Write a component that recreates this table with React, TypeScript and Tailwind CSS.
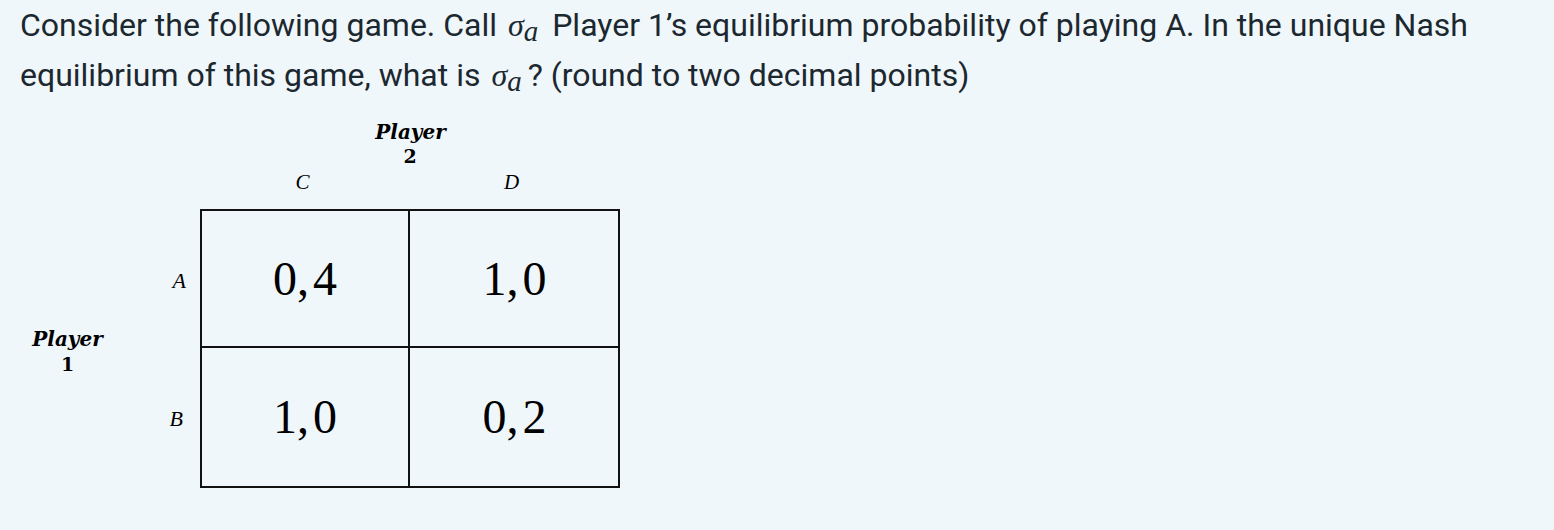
import React from 'react';

const serif = "font-['Liberation_Serif','DejaVu_Serif',serif]";
const labelSerif = "font-['DejaVu_Serif','Liberation_Serif',serif]";

const Sigma: React.FC = () => (
  <span className={`${serif} italic text-[32px] ml-[3px] mr-[6px]`}>
    σ<sub className="text-[29px] relative top-[5px] align-baseline">a</sub>
  </span>
);

const Cell: React.FC<{ value: string; className?: string }> = ({ value, className = '' }) => (
  <div className={`flex items-center justify-center ${serif} text-[48px] text-black ${className}`}>
    {value}
  </div>
);

export default function App() {
  return (
    <div className="w-full h-[530px] bg-[#f0f7fa] font-['Roboto',sans-serif] text-[#1c2830]">
      <p className="pl-[20px] text-[32px] leading-[50px]">
        Consider the following game. Call <Sigma /> Player 1’s equilibrium probability of playing A. In the unique Nash
        <br />
        equilibrium of this game, what is <Sigma />? (round to two decimal points)
      </p>

      {/* game matrix */}
      <div className="flex pl-[20px] mt-[20px] text-black">
        <div className="w-[95px] flex flex-col justify-end pb-[112px]">
          <div className={`${labelSerif} font-bold italic text-[20px] leading-[26px] text-center`}>Player</div>
          <div className={`${labelSerif} font-bold text-[19px] leading-[24px] text-center`}>1</div>
        </div>
        <div className="w-[85px] flex flex-col justify-end">
          <div className={`h-[138px] flex items-center justify-end pr-[14px] ${serif} italic text-[22px]`}>A</div>
          <div className={`h-[139px] flex items-center justify-end pr-[17px] ${serif} italic text-[22px]`}>B</div>
        </div>
        <div className="flex flex-col">
          <div className="flex flex-col items-center w-[420px]">
            <div className={`${labelSerif} font-bold italic text-[20px] leading-[24px] ml-[1px]`}>Player</div>
            <div className={`${labelSerif} font-bold text-[19px] leading-[24px]`}>2</div>
          </div>
          <div className={`flex w-[420px] ${serif} italic text-[21px] leading-[26px] mt-[1px] mb-[14px]`}>
            <div className="w-[209px] text-center pr-[4px]">C</div>
            <div className="w-[209px] text-center pr-[4px]">D</div>
          </div>
          <div className="grid grid-cols-[208px_209px] grid-rows-[137px_138px] border-2 border-[#111] w-[420px]">
            <Cell value={'0,\u200a4'} className="border-r-2 border-b-2 border-[#111]" />
            <Cell value={'1,\u200a0'} className="border-b-2 border-[#111]" />
            <Cell value={'1,\u200a0'} className="border-r-2 border-[#111]" />
            <Cell value={'0,\u200a2'} />
          </div>
        </div>
      </div>
    </div>
  );
}
